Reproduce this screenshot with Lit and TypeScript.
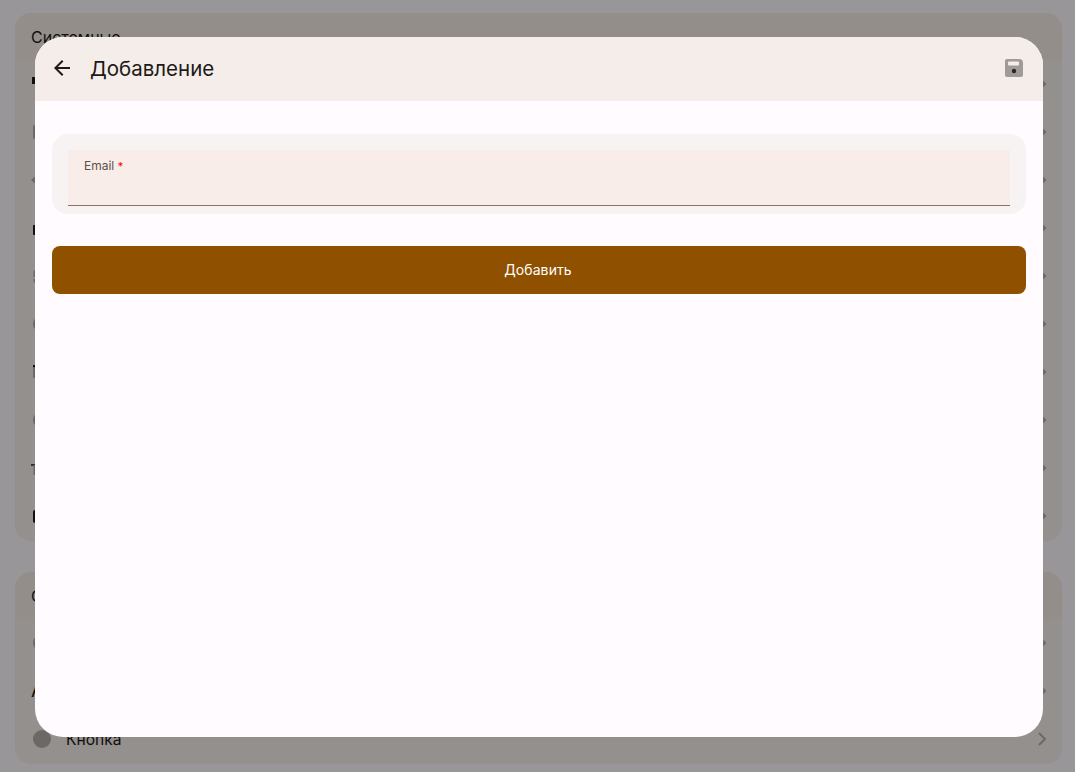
import { LitElement, html, css, svg } from "lit";
import { customElement } from "lit/decorators.js";

const INK = "#1f1a17";
const MUTED = "#b2adaa";

type Row = { label: string; glyph?: string; shape?: unknown };

const rows1: Row[] = [
  { label: "Сеть", shape: svg`<path d="M2 5h6v7H2z" fill="${INK}"/>` },
  { label: "Экран", shape: svg`<rect x="3" y="5" width="18" height="14" rx="2" fill="${MUTED}"/>` },
  { label: "Звук", shape: svg`<path d="M1 12l7-6v12z" fill="${MUTED}"/><path d="M8 8h12v8H8z" fill="${MUTED}"/>` },
  { label: "Батарея", shape: svg`<rect x="3" y="9" width="18" height="10" rx="1" fill="${INK}"/>` },
  { label: "Память", shape: svg`<path d="M3.5 8a2 2 0 0 1 2-2H20v4H8v3H3.5zM3.5 15H8v4H5.5a2 2 0 0 1-2-2z" fill="${MUTED}"/>` },
  { label: "Приложения", shape: svg`<circle cx="12" cy="12" r="9" fill="${MUTED}"/>` },
  { label: "Хранилище", shape: svg`<rect x="3" y="5" width="2.5" height="2.5" fill="${INK}"/><rect x="3" y="7.5" width="18" height="10.5" rx="1" fill="${MUTED}"/>` },
  { label: "Время", shape: svg`<circle cx="12" cy="12" r="9" fill="${MUTED}"/>` },
  { label: "Ввод", shape: svg`<path d="M1 9h10" stroke="${INK}" stroke-width="1.5" fill="none"/><path d="M4.5 9v10" stroke="${MUTED}" stroke-width="2" fill="none"/>` },
  { label: "Устройство", shape: svg`<rect x="3" y="6" width="18" height="13" rx="2" fill="${INK}"/>` },
];

const rows2: Row[] = [
  { label: "Цвет", shape: svg`<circle cx="12" cy="12" r="9" fill="${MUTED}"/>` },
  { label: "Текст", glyph: "А" },
  { label: "Кнопка", shape: svg`<circle cx="12" cy="12" r="9" fill="${MUTED}"/>` },
];

@customElement("app-root")
export class AppRoot extends LitElement {
  static styles = css`
    :host {
      display: block;
      position: relative;
      width: 1075px;
      height: 772px;
      overflow: hidden;
      background: #fffbff;
      font-family: Inter, "Noto Sans", sans-serif;
      color: #201a17;
    }
    .page {
      display: flex;
      flex-direction: column;
      gap: 31px;
      padding: 13px 13px 0 15px;
    }
    .group {
      border-radius: 16px;
      background: #f7f0eb;
      overflow: hidden;
      padding-bottom: 1px;
    }
    .group-head {
      height: 47px;
      display: flex;
      align-items: center;
      padding-left: 16px;
      font-size: 16px;
      background: #f6ede7;
    }
    .row {
      height: 48px;
      display: flex;
      align-items: center;
      padding: 0 8px 0 15px;
      gap: 12px;
      font-size: 15.6px;
    }
    .row span {
      flex: 1;
    }
    .row svg {
      width: 24px;
      height: 24px;
      display: block;
    }
    .row .glyph {
      flex: none;
      width: 23px;
      padding-left: 1px;
      font-size: 19px;
      text-align: left;
      line-height: 24px;
    }
    .scrim {
      position: absolute;
      inset: 0;
      background: rgba(0, 0, 0, 0.4);
    }
    .dialog {
      position: absolute;
      left: 35px;
      top: 37px;
      width: 1008px;
      height: 700px;
      border-radius: 28px;
      background: #fffbff;
      overflow: hidden;
    }
    .bar {
      height: 64px;
      box-sizing: border-box;
      display: flex;
      align-items: center;
      background: #f5edea;
      padding: 0 17px 2px 15px;
    }
    .bar svg {
      display: block;
    }
    .title {
      flex: 1;
      margin-left: 16px;
      font-size: 20.5px;
      color: #201a17;
    }
    .content {
      display: flex;
      flex-direction: column;
      gap: 32px;
      padding: 33px 17px 0;
    }
    .panel {
      padding: 16px;
      height: 80px;
      box-sizing: border-box;
      border-radius: 16px;
      background: #f7f3f2;
    }
    .field {
      height: 56px;
      box-sizing: border-box;
      padding: 8px 16px 0;
      background: #f8ede8;
      border-bottom: 1px solid #84746a;
      font-size: 12px;
      line-height: 16px;
      color: #5e504a;
    }
    .req {
      color: #f00;
      font-size: 11px;
    }
    .add {
      height: 48px;
      border: none;
      border-radius: 8px;
      background: #8f5000;
      color: #fff;
      font: 400 14px/20px Inter, "Noto Sans", sans-serif;
      letter-spacing: 0.1px;
      padding: 0 2px 0 0;
    }
  `;

  private chevron() {
    return html`<svg viewBox="0 0 24 24">
      <path d="M9 6l6 6-6 6" fill="none" stroke="#b2adaa" stroke-width="2" />
    </svg>`;
  }

  private group(title: string, rows: Row[]) {
    return html`<section class="group">
      <div class="group-head">${title}</div>
      ${rows.map(
        (r) => html`<div class="row">
          ${r.glyph
            ? html`<div class="glyph">${r.glyph}</div>`
            : html`<svg viewBox="0 0 24 24">${r.shape}</svg>`}
          <span>${r.label}</span>
          ${this.chevron()}
        </div>`
      )}
    </section>`;
  }

  render() {
    return html`
      <div class="page">
        ${this.group("Системные", rows1)} ${this.group("Отображение", rows2)}
      </div>
      <div class="scrim"></div>
      <div class="dialog">
        <header class="bar">
          <svg width="24" height="24" viewBox="0 0 24 24">
            <path d="M20 11H7.83l5.59-5.59L12 4l-8 8 8 8 1.41-1.41L7.83 13H20z" fill="#201a17" />
          </svg>
          <div class="title">Добавление</div>
          <svg width="24" height="24" viewBox="0 0 24 24">
            <path
              d="M17 3H5a2 2 0 0 0-2 2v14a2 2 0 0 0 2 2h14a2 2 0 0 0 2-2V7a4 4 0 0 0-4-4z"
              fill="#a09b98"
            />
            <rect x="6" y="5.5" width="11" height="4" rx="1" fill="#f5edea" />
            <circle cx="12" cy="15" r="2.2" fill="#2b2623" />
          </svg>
        </header>
        <div class="content">
          <div class="panel">
            <div class="field">Email <span class="req">*</span></div>
          </div>
          <button class="add">Добавить</button>
        </div>
      </div>
    `;
  }
}
